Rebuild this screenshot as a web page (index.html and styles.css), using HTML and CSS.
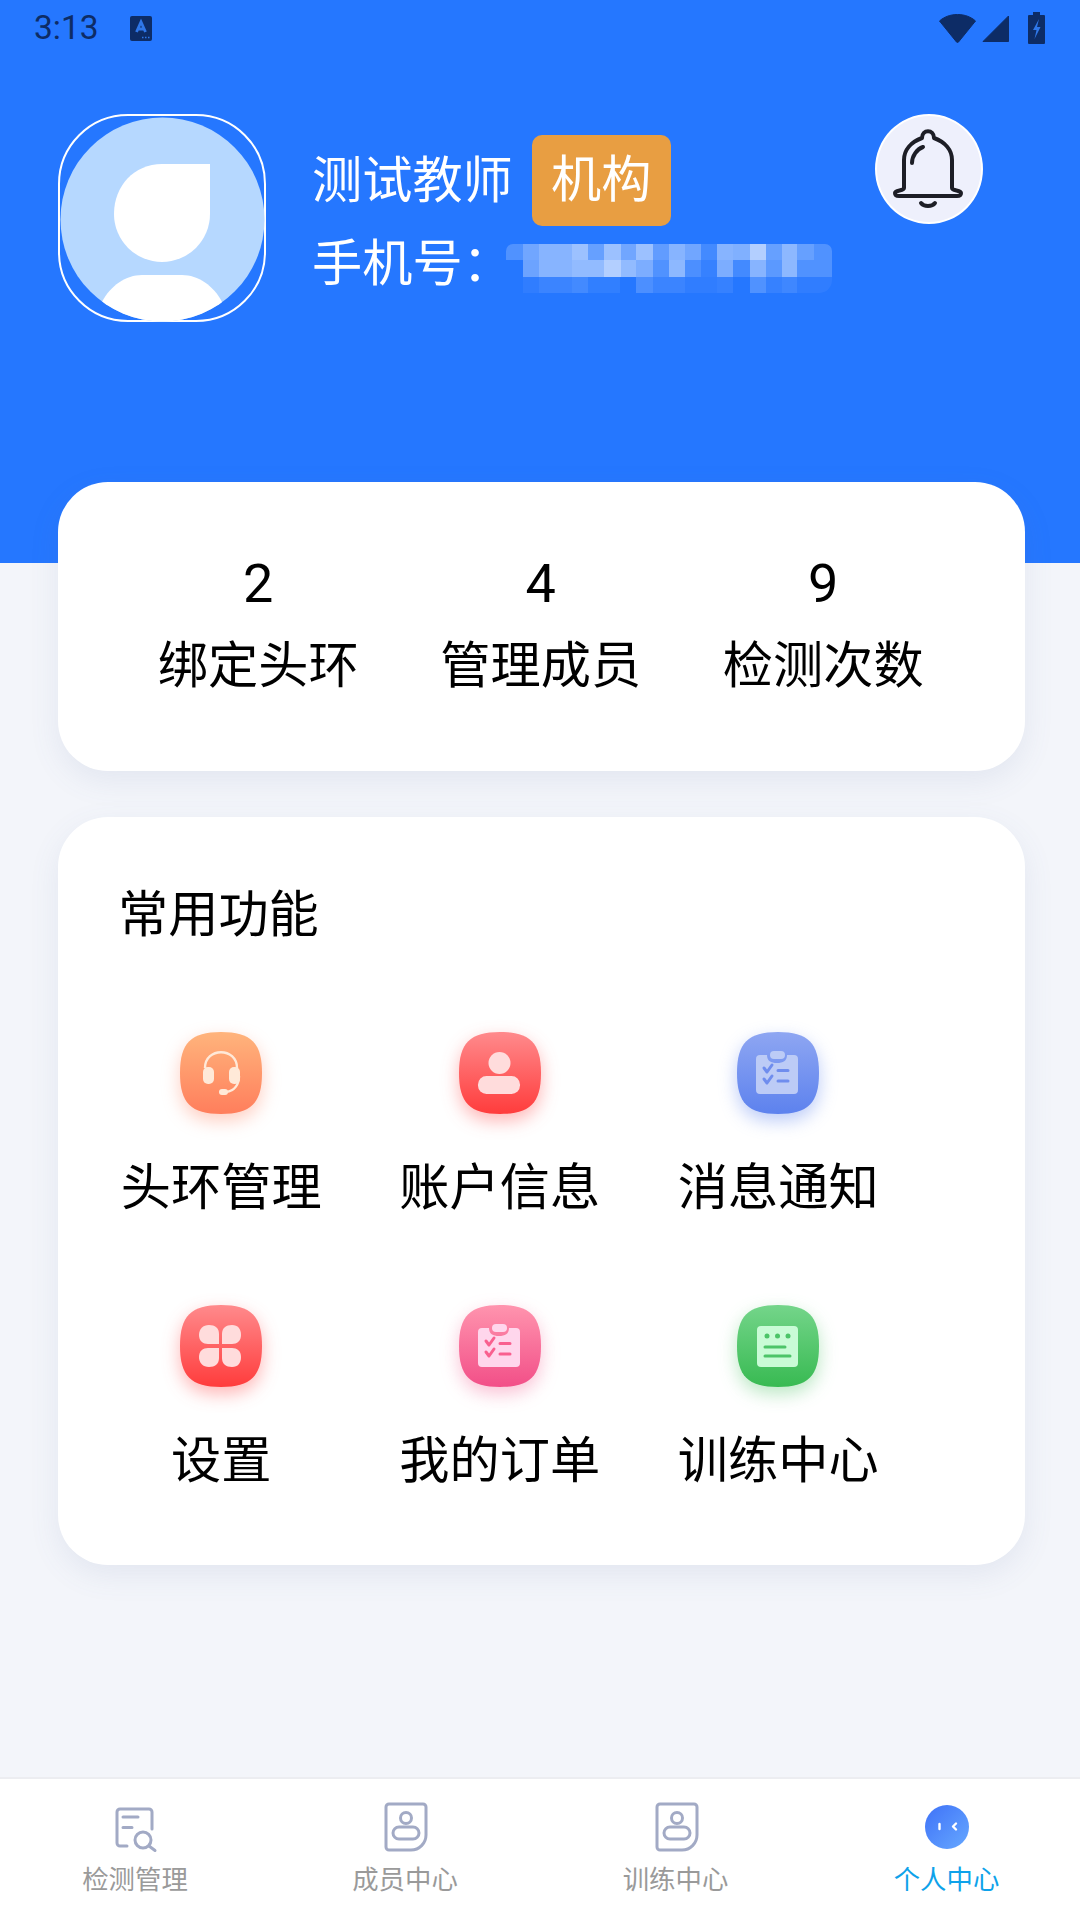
FILE: index.html
```html
<!DOCTYPE html>
<html lang="zh">
<head>
<meta charset="utf-8">
<title>个人中心</title>
<link rel="stylesheet" href="styles.css">
</head>
<body>
<div class="app">
  <svg class="defs" width="0" height="0" aria-hidden="true">
    <defs>
      <path id="squircle" d="M41 0C71 0 82 11 82 41S71 82 41 82 0 71 0 41 11 0 41 0Z"/>
      <linearGradient id="g-orange" x1="0" y1="0" x2="0" y2="1"><stop offset="0" stop-color="#FFB47C"/><stop offset="1" stop-color="#FF7E5C"/></linearGradient>
      <linearGradient id="g-red" x1="0" y1="0" x2="0" y2="1"><stop offset="0" stop-color="#FF8A8C"/><stop offset="1" stop-color="#FF3C3C"/></linearGradient>
      <linearGradient id="g-blue" x1="0" y1="0" x2="0" y2="1"><stop offset="0" stop-color="#8EA6F2"/><stop offset="1" stop-color="#5D82EE"/></linearGradient>
      <linearGradient id="g-pink" x1="0" y1="0" x2="0" y2="1"><stop offset="0" stop-color="#FF94AE"/><stop offset="1" stop-color="#F24F88"/></linearGradient>
      <linearGradient id="g-green" x1="0" y1="0" x2="0" y2="1"><stop offset="0" stop-color="#74D58A"/><stop offset="1" stop-color="#38BA52"/></linearGradient>
      <linearGradient id="g-active" x1="0" y1="0" x2="1" y2="1"><stop offset="0" stop-color="#3F72F8"/><stop offset="1" stop-color="#66A8FF"/></linearGradient>
    </defs>
  </svg>

  <header class="hero">
    <div class="status">
      <div class="status-left">
        <span class="time">3:13</span>
        <svg class="status-a" width="22" height="25" viewBox="0 0 22 25">
          <rect width="22" height="25" rx="2" fill="#0D2C66"/>
          <path d="M6.500 16 11 6l4.500 10M8 13h6" fill="none" stroke="#2F77E8" stroke-width="2.800"/>
          <path d="M12 21.500h1.500M15 21.500h1.500M18 21.500h1.500" stroke="#2F77E8" stroke-width="1.500"/>
        </svg>
      </div>
      <div class="status-right">
        <svg width="37" height="29" viewBox="0 0 37 29"><path d="M.5 7C5 3 11 .5 18.500.5S32 3 36.500 7L19.500 28a1.300 1.300 0 0 1-2 0Z" fill="#0D2C66" stroke="#0D2C66" stroke-linejoin="round"/></svg>
        <svg width="27" height="27" viewBox="0 0 27 27"><path d="M26.500 1v25.500H1Z" fill="#0D2C66" stroke="#0D2C66" stroke-linejoin="round"/></svg>
        <svg class="status-battery" width="17" height="32" viewBox="0 0 17 32"><path d="M5 0h7v3h4a1 1 0 0 1 1 1v27a1 1 0 0 1-1 1H1a1 1 0 0 1-1-1V4a1 1 0 0 1 1-1h4Z" fill="#0D2C66"/><path d="M11 7 5 18h3.500L6.500 27l6-12H9Z" fill="#2F77E8"/></svg>
      </div>
    </div>

    <div class="profile">
      <div class="avatar">
        <svg width="208" height="208" viewBox="0 0 208 208">
          <defs><clipPath id="avatar-clip"><circle cx="104.500" cy="105.500" r="102"/></clipPath></defs>
          <circle cx="104.500" cy="105.500" r="102" fill="#B6D8FF"/>
          <path d="M152 50v50a48 48 0 0 1-96 0c0-28 20-50 48-50Z" fill="#fff"/>
          <path d="M44 240V188C52 172 68 161 84 161h40c16 0 32 11 40 27V240Z" fill="#fff" clip-path="url(#avatar-clip)"/>
        </svg>
      </div>
      <div class="identity">
        <div class="name-row">
          <span class="name">测试教师</span>
          <span class="badge">机构</span>
        </div>
        <div class="phone-row">
          <span class="phone-label">手机号：</span>
          <svg class="phone-mask" width="326" height="49" viewBox="0 0 326 49" shape-rendering="crispEdges">
            <g fill="#fff">
              <path d="M0 16V7a7 7 0 0 1 7-7h10v16Z" fill-opacity=".2" shape-rendering="auto"/>
              <rect x="17" width="16" height="16" fill-opacity=".35"/><rect x="33" width="33" height="16" fill-opacity=".45"/><rect x="66" width="16" height="16" fill-opacity=".55"/><rect x="82" width="16" height="16" fill-opacity=".3"/><rect x="98" width="17" height="16" fill-opacity=".55"/><rect x="115" width="15" height="16" fill-opacity=".35"/><rect x="130" width="17" height="16" fill-opacity=".55"/><rect x="147" width="16" height="16" fill-opacity=".28"/><rect x="163" width="16" height="16" fill-opacity=".45"/><rect x="179" width="16" height="16" fill-opacity=".35"/><rect x="195" width="16" height="16" fill-opacity=".14"/><rect x="211" width="16" height="16" fill-opacity=".45"/><rect x="227" width="17" height="16" fill-opacity=".42"/><rect x="244" width="16" height="16" fill-opacity=".65"/><rect x="260" width="16" height="16" fill-opacity=".3"/><rect x="276" width="15" height="16" fill-opacity=".48"/><rect x="291" width="17" height="16" fill-opacity=".3"/><path d="M308 0h11a7 7 0 0 1 7 7v9h-18Z" fill-opacity=".2" shape-rendering="auto"/>
              <rect x="17" y="16" width="16" height="17" fill-opacity=".33"/><rect x="33" y="16" width="33" height="17" fill-opacity=".45"/><rect x="66" y="16" width="32" height="17" fill-opacity=".5"/><rect x="98" y="16" width="17" height="17" fill-opacity=".65"/><rect x="115" y="16" width="15" height="17" fill-opacity=".5"/><rect x="130" y="16" width="17" height="17" fill-opacity=".4"/><rect x="147" y="16" width="16" height="17" fill-opacity=".2"/><rect x="163" y="16" width="16" height="17" fill-opacity=".48"/><rect x="179" y="16" width="16" height="17" fill-opacity=".18"/><rect x="195" y="16" width="16" height="17" fill-opacity=".08"/><rect x="211" y="16" width="16" height="17" fill-opacity=".4"/><rect x="227" y="16" width="17" height="17" fill-opacity=".14"/><rect x="244" y="16" width="16" height="17" fill-opacity=".45"/><rect x="260" y="16" width="16" height="17" fill-opacity=".25"/><rect x="276" y="16" width="15" height="17" fill-opacity=".48"/><rect x="291" y="16" width="35" height="17" fill-opacity=".2"/>
              <rect x="17" y="33" width="16" height="16" fill-opacity=".05"/><rect x="33" y="33" width="33" height="16" fill-opacity=".1"/><rect x="66" y="33" width="16" height="16" fill-opacity=".14"/><rect x="82" y="33" width="32" height="16" fill-opacity=".06"/><rect x="130" y="33" width="17" height="16" fill-opacity=".18"/><rect x="147" y="33" width="32" height="16" fill-opacity=".1"/><rect x="179" y="33" width="32" height="16" fill-opacity=".05"/><rect x="211" y="33" width="16" height="16" fill-opacity=".08"/><rect x="244" y="33" width="16" height="16" fill-opacity=".2"/><rect x="260" y="33" width="16" height="16" fill-opacity=".08"/><rect x="276" y="33" width="15" height="16" fill-opacity=".12"/><path d="M291 33h35v3a13 13 0 0 1-13 13h-22Z" fill-opacity=".05" shape-rendering="auto"/>
            </g>
          </svg>
        </div>
      </div>
      <div class="bell">
        <svg width="108" height="110" viewBox="0 0 108 110" fill="none" stroke="#1D1E26" stroke-width="4" stroke-linecap="round" stroke-linejoin="round">
          <path d="M30 72V44c0-10 7-18 18-22 0-9 12-9 12 0 11 4 18 12 18 22v28c0 3 9 2 9 5 0 3-2 3-4 3H25c-2 0-4 0-4-3 0-3 9-2 9-5Z" transform="translate(-1 2)"/>
          <path d="M37 49c0-7 5-14 11-16"/>
          <path d="M46 89c3 4 11 4 14 0"/>
        </svg>
      </div>
    </div>
  </header>

  <main class="content">
    <section class="card stats">
      <div class="stat"><span class="stat-value">2</span><span class="stat-label">绑定头环</span></div>
      <div class="stat"><span class="stat-value">4</span><span class="stat-label">管理成员</span></div>
      <div class="stat"><span class="stat-value">9</span><span class="stat-label">检测次数</span></div>
    </section>

    <section class="card features">
      <h2 class="features-title">常用功能</h2>
      <div class="feature-grid">
        <div class="feature">
          <svg class="feature-icon shadow-orange" width="82" height="82" viewBox="0 0 82 82">
            <use href="#squircle" fill="url(#g-orange)"/>
            <path d="M25 36c0-21 32-21 32 0M59 44c0 8-4 15-13 16" fill="none" stroke="#FFE9D8" stroke-width="2.400"/>
            <rect x="23" y="35" width="11" height="17" rx="5" fill="#FFE9D8"/>
            <rect x="49" y="35" width="11" height="17" rx="5" fill="#FFE9D8"/>
            <rect x="39" y="57" width="9" height="6" rx="3" fill="#FFE9D8"/>
          </svg>
          <span class="feature-label">头环管理</span>
        </div>
        <div class="feature">
          <svg class="feature-icon shadow-red" width="82" height="82" viewBox="0 0 82 82">
            <use href="#squircle" fill="url(#g-red)"/>
            <ellipse cx="40.500" cy="31" rx="11" ry="11" fill="#FFDCDC"/>
            <rect x="19" y="44" width="42" height="18" rx="8.500" fill="#FFDCDC"/>
          </svg>
          <span class="feature-label">账户信息</span>
        </div>
        <div class="feature">
          <svg class="feature-icon shadow-blue" width="82" height="82" viewBox="0 0 82 82">
            <use href="#squircle" fill="url(#g-blue)"/>
            <path d="M23 23h7c0 6 4 8 10 8s10-2 10-8h7a4 4 0 0 1 4 4v31a4 4 0 0 1-4 4H23a4 4 0 0 1-4-4V27a4 4 0 0 1 4-4Z" fill="#BCCBF6"/>
            <rect x="33" y="19" width="15" height="8" rx="4" fill="#BCCBF6"/>
            <path d="M27 36l3 4 5-7M27 47l3 4 5-7" fill="none" stroke="#6F8DEE" stroke-width="3" stroke-linecap="round" stroke-linejoin="round"/>
            <path d="M41 38.500h10M41 49h10" stroke="#6F8DEE" stroke-width="3" stroke-linecap="round"/>
          </svg>
          <span class="feature-label">消息通知</span>
        </div>
        <div class="feature">
          <svg class="feature-icon shadow-red" width="82" height="82" viewBox="0 0 82 82">
            <use href="#squircle" fill="url(#g-red)"/>
            <g fill="#FFDCDC">
              <path d="M39 39V29c0-6-4-9-10-9-6 0-10 4-10 10s4 9 9 9Z"/>
              <path d="M42 39V29c0-6 4-9 10-9 6 0 9 4 9 10s-4 9-9 9Z"/>
              <path d="M39 43v10c0 6-4 9-10 9-6 0-10-4-10-10s4-9 9-9Z"/>
              <path d="M42 43v10c0 6 4 9 10 9 6 0 9-4 9-10s-4-9-9-9Z"/>
            </g>
          </svg>
          <span class="feature-label">设置</span>
        </div>
        <div class="feature">
          <svg class="feature-icon shadow-pink" width="82" height="82" viewBox="0 0 82 82">
            <use href="#squircle" fill="url(#g-pink)"/>
            <path d="M23 23h7c0 6 4 8 10 8s10-2 10-8h7a4 4 0 0 1 4 4v31a4 4 0 0 1-4 4H23a4 4 0 0 1-4-4V27a4 4 0 0 1 4-4Z" fill="#FFD6EC"/>
            <rect x="33" y="19" width="15" height="8" rx="4" fill="#FFD6EC"/>
            <path d="M27 36l3 4 5-7M27 47l3 4 5-7" fill="none" stroke="#F9608F" stroke-width="3" stroke-linecap="round" stroke-linejoin="round"/>
            <path d="M41 38.500h10M41 49h10" stroke="#F9608F" stroke-width="3" stroke-linecap="round"/>
          </svg>
          <span class="feature-label">我的订单</span>
        </div>
        <div class="feature">
          <svg class="feature-icon shadow-green" width="82" height="82" viewBox="0 0 82 82">
            <use href="#squircle" fill="url(#g-green)"/>
            <rect x="20" y="21" width="41" height="41" rx="4" fill="#C9FBD6"/>
            <g fill="#4CC468"><circle cx="30" cy="31" r="2.500"/><circle cx="40.500" cy="31" r="2.500"/><circle cx="51" cy="31" r="2.500"/></g>
            <path d="M28 42h20M28 51h25" stroke="#4CC468" stroke-width="3" stroke-linecap="round"/>
          </svg>
          <span class="feature-label">训练中心</span>
        </div>
      </div>
    </section>
  </main>

  <nav class="tabbar">
    <div class="tab">
      <svg width="60" height="56" viewBox="0 0 60 56" fill="none" stroke="#A2AAC5" stroke-width="3" stroke-linecap="round" stroke-linejoin="round">
        <path d="M22 46h-7a3 3 0 0 1-3-3V12a3 3 0 0 1 3-3h29a3 3 0 0 1 3 3v17"/>
        <path d="M18 17h15M18 27.500h9"/>
        <circle cx="38" cy="40" r="8"/>
        <path d="M44 46l6 4.500"/>
      </svg>
      <span class="tab-label">检测管理</span>
    </div>
    <div class="tab">
      <svg width="60" height="56" viewBox="0 0 60 56" fill="none" stroke="#A2AAC5" stroke-width="3" stroke-linejoin="round">
        <path d="M11 7a3 3 0 0 1 3-3h34a3 3 0 0 1 3 3v28a15 15 0 0 1-15 15H14a3 3 0 0 1-3-3Z"/>
        <circle cx="31" cy="18" r="5.500"/>
        <rect x="18" y="27" width="26" height="12" rx="6"/>
      </svg>
      <span class="tab-label">成员中心</span>
    </div>
    <div class="tab">
      <svg width="60" height="56" viewBox="0 0 60 56" fill="none" stroke="#A2AAC5" stroke-width="3" stroke-linejoin="round">
        <path d="M11 7a3 3 0 0 1 3-3h34a3 3 0 0 1 3 3v28a15 15 0 0 1-15 15H14a3 3 0 0 1-3-3Z"/>
        <circle cx="31" cy="18" r="5.500"/>
        <rect x="18" y="27" width="26" height="12" rx="6"/>
      </svg>
      <span class="tab-label">训练中心</span>
    </div>
    <div class="tab tab-active">
      <svg width="60" height="56" viewBox="0 0 60 56" fill="none">
        <circle cx="30" cy="27" r="22" fill="url(#g-active)"/>
        <path d="M22.500 24v5" stroke="#fff" stroke-width="2.400" stroke-linecap="round"/>
        <path d="M39 23.500l-3 3 3 3" stroke="#fff" stroke-width="2.400" stroke-linecap="round" stroke-linejoin="round"/>
      </svg>
      <span class="tab-label">个人中心</span>
    </div>
  </nav>
</div>
</body>
</html>
```

FILE: styles.css
```css
* { box-sizing: border-box; }

html, body {
  margin: 0;
  padding: 0;
}

body {
  font-family: "Noto Sans CJK SC", "Noto Sans", sans-serif;
  color: #000;
  background: #F3F5FA;
}

.app {
  width: 1080px;
  height: 1920px;
  display: flex;
  flex-direction: column;
  overflow: hidden;
}

.defs { position: absolute; }

.hero {
  height: 563px;
  flex: none;
  background: #2577FF;
  color: #fff;
}

.status {
  height: 56px;
  display: flex;
  justify-content: space-between;
  align-items: center;
  padding: 0 35px 0 34px;
}

.status-left {
  display: flex;
  align-items: center;
  gap: 31px;
}

.status-right {
  display: flex;
  align-items: center;
  gap: 6px;
}

.status-battery { margin-left: 13px; }

.time {
  font-family: Roboto, sans-serif;
  font-size: 33.500px;
  line-height: 60px;
  color: #0D2C66;
}

.profile {
  display: flex;
  align-items: flex-start;
  margin-top: 58px;
  padding: 0 97px 0 58px;
}

.avatar {
  width: 208px;
  height: 208px;
  flex: none;
  border: 2px solid #fff;
  border-radius: 70px;
  margin-right: 46px;
  display: flex;
}

.avatar svg {
  margin: -2px;
  flex: none;
}

.identity {
  display: flex;
  flex-direction: column;
  flex: 1;
  padding-top: 21px;
}

.name-row {
  display: flex;
  align-items: center;
  gap: 19px;
  height: 91px;
}

.name {
  font-size: 50.200px;
  line-height: 70px;
  margin-top: -9px;
}

.badge {
  width: 139px;
  height: 91px;
  background: #E89E42;
  border-radius: 10px;
  font-size: 50.200px;
  line-height: 80px;
  text-align: center;
}

.phone-row {
  display: flex;
  align-items: center;
  height: 49px;
  margin-top: 18px;
}

.phone-label {
  font-size: 50.200px;
  line-height: 49px;
  width: 194px;
  flex: none;
  white-space: nowrap;
  margin-bottom: 18px;
}

.bell {
  width: 108px;
  height: 110px;
  flex: none;
  background: #EEF0FC;
  border: 2px solid #fff;
  border-radius: 50%;
  display: flex;
}

.bell svg {
  margin: -2px;
  flex: none;
}

.content {
  flex: 1;
  display: flex;
  flex-direction: column;
  gap: 46px;
  padding: 0 55px 0 58px;
  margin-top: -81px;
}

.card {
  background: #fff;
  border-radius: 50px;
  box-shadow: 0 10px 30px rgba(90, 110, 160, 0.10);
}

.stats {
  height: 289px;
  display: grid;
  grid-template-columns: repeat(3, 282.500px);
  padding: 0 59px;
  align-content: start;
  padding-top: 72px;
}

.stat {
  display: flex;
  flex-direction: column;
  align-items: center;
}

.stat-value {
  font-family: Roboto, sans-serif;
  font-size: 54px;
  line-height: 60px;
}

.stat-label {
  font-size: 50.200px;
  line-height: 70px;
  margin-top: 12px;
}

.features {
  height: 748px;
  padding: 58px 0 0 22px;
}

.features-title {
  margin: 0 0 0 38px;
  font-size: 50.200px;
  font-weight: 400;
  line-height: 70px;
}

.feature-grid {
  display: grid;
  grid-template-columns: repeat(3, 278.500px);
  grid-auto-rows: 273px;
  margin-top: 87px;
  margin-left: 2px;
}

.feature {
  display: flex;
  flex-direction: column;
  align-items: center;
}

.feature-icon {
  flex: none;
  overflow: visible;
}

.shadow-orange { filter: drop-shadow(0 7px 9px rgba(255, 126, 92, 0.38)); }
.shadow-red { filter: drop-shadow(0 7px 9px rgba(255, 60, 60, 0.38)); }
.shadow-blue { filter: drop-shadow(0 7px 9px rgba(93, 130, 238, 0.42)); }
.shadow-pink { filter: drop-shadow(0 7px 9px rgba(242, 79, 136, 0.35)); }
.shadow-green { filter: drop-shadow(0 7px 9px rgba(56, 186, 82, 0.35)); }

.feature-label {
  font-size: 50.200px;
  line-height: 70px;
  margin-top: 34px;
}

.tabbar {
  height: 143px;
  flex: none;
  display: grid;
  grid-template-columns: 270px 270px 271px 271px;
  background: #fff;
  border-top: 2px solid #ECEDF1;
}

.tab {
  display: flex;
  flex-direction: column;
  align-items: center;
  padding-top: 21px;
}

.tab-label {
  font-size: 26.400px;
  line-height: 36px;
  margin-top: 4px;
  color: #9A9A9A;
}

.tab-active .tab-label { color: #0EA2EA; }
```
